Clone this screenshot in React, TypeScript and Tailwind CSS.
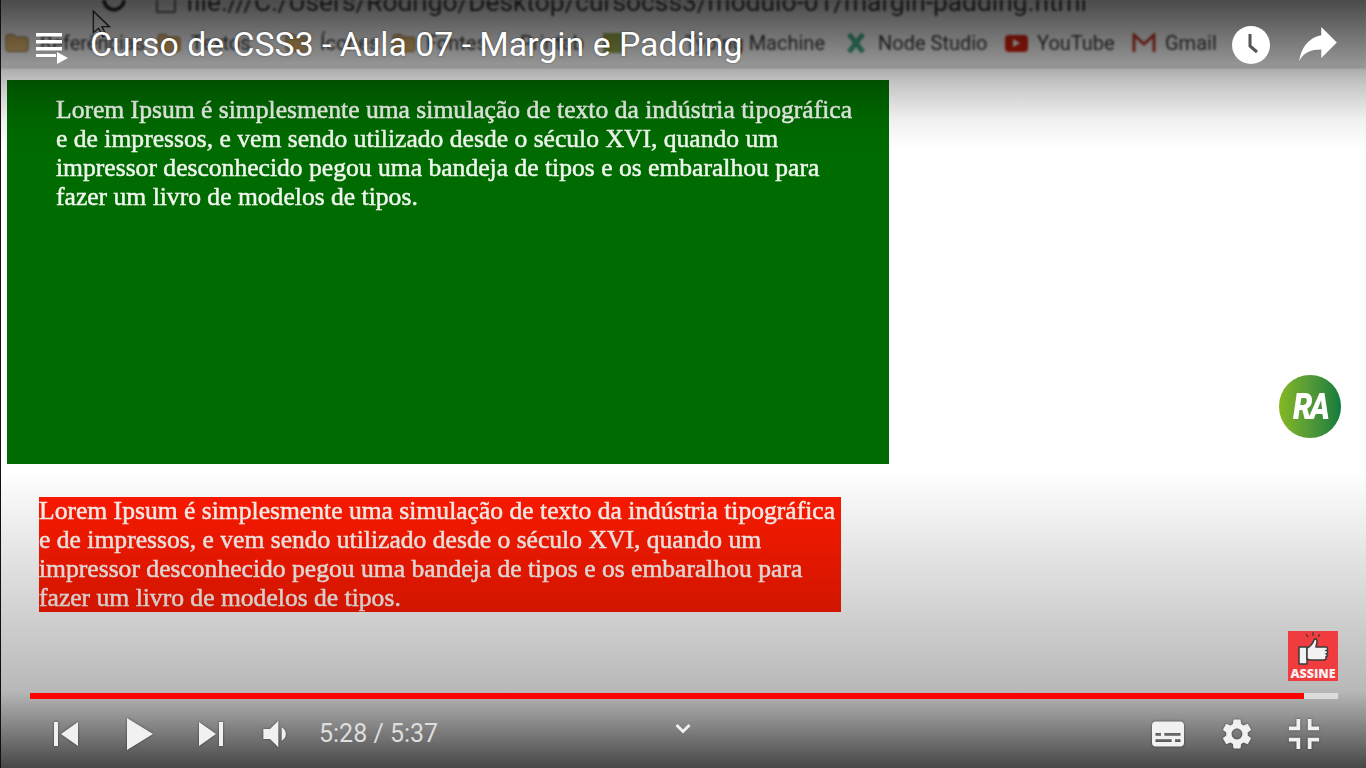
import { MdSettings } from "react-icons/md";

const LOREM =
  "Lorem Ipsum é simplesmente uma simulação de texto da indústria tipográfica e de impressos, e vem sendo utilizado desde o século XVI, quando um impressor desconhecido pegou uma bandeja de tipos e os embaralhou para fazer um livro de modelos de tipos.";

function Folder() {
  return (
    <svg width="24" height="20" viewBox="0 0 24 20" className="shrink-0">
      <path d="M1 3.500C1 2.400 1.900 1.500 3 1.500h6l2.500 2.500H21c1.100 0 2 .9 2 2v10.500c0 1.100-.9 2-2 2H3c-1.100 0-2-.9-2-2z" fill="#d0a866" stroke="#7d6a45" strokeWidth="1" />
    </svg>
  );
}

function BrowserChrome() {
  return (
    <div className="h-[68px] bg-[#e6e6e6] border-b border-[#b5b5b5] overflow-hidden blur-[1px] text-[#222]">
      {/* address bar, cut off by the video's top edge */}
      <div className="h-[22px] flex items-end pl-[102px]">
        <svg width="26" height="30" viewBox="0 0 26 30" className="shrink-0 mb-[5px]">
          <path d="M22 13a10 10 0 1 1-3.500-8" fill="none" stroke="#222" strokeWidth="3.500" />
        </svg>
        <div className="w-[20px] h-[14px] ml-[28px] border-2 border-t-0 border-[#666] rounded-b-[2px] shrink-0 mb-[9px]" />
        <span className="ml-[10px] text-[26.300px] leading-[28px] whitespace-nowrap mb-[6px] text-[#333] font-['Roboto',sans-serif]">
          file:///C:/Users/Rodrigo/Desktop/cursocss3/modulo-01/margin-padding.html
        </span>
      </div>
      {/* bookmarks */}
      <div className="h-[46px] flex items-center pb-[4px] pl-[5px] text-[20px] whitespace-nowrap font-['Roboto',sans-serif] text-[#333]">
        <Folder />
        <span className="ml-[11px] w-[117px]">Referências</span>
        <Folder />
        <span className="ml-[10px] w-[94px]">Textos</span>
        <Folder />
        <span className="ml-[11px] w-[72px]">Ícones</span>
        <Folder />
        <span className="ml-[10px] w-[94px]">Fontes</span>
        <span className="w-[83px]">Printab</span>
        <span className="w-[22px] h-[20px] bg-[#8d9c45] shrink-0" />
        <span className="w-[200px] text-right">Typing Machine</span>
        <svg width="20" height="24" viewBox="0 0 20 24" className="ml-[21px] shrink-0">
          <path d="M3 3l14 18M17 3L3 21" stroke="#3f9f80" strokeWidth="5" fill="none" />
        </svg>
        <span className="ml-[12px] w-[127px]">Node Studio</span>
        <span className="w-[23px] h-[17px] bg-[#c9200e] rounded-[4px] flex items-center justify-center shrink-0">
          <span className="border-l-[7px] border-l-[#eee] border-y-[4px] border-y-transparent" />
        </span>
        <span className="ml-[9px] w-[95px]">YouTube</span>
        <svg width="24" height="20" viewBox="0 0 24 20" className="shrink-0">
          <path d="M2 19V2l10 9 10-9v17" stroke="#b3352a" strokeWidth="3" fill="none" />
        </svg>
        <span className="ml-[9px]">Gmail</span>
      </div>
    </div>
  );
}

function VideoCursor() {
  return (
    <svg width="24" height="30" viewBox="0 0 22 28" className="absolute left-[91px] top-[9px] blur-[0.5px]">
      <path d="M2 2v20l5-4 4 8 3-1.500-4-8h7z" fill="none" stroke="#333" strokeWidth="1.300" />
    </svg>
  );
}

function TopBar() {
  return (
    <div className="absolute inset-x-0 top-0 h-[150px] bg-[linear-gradient(to_bottom,rgba(0,0,0,0.68)_0px,rgba(0,0,0,0.38)_60px,rgba(0,0,0,0.22)_85px,rgba(0,0,0,0.06)_120px,rgba(0,0,0,0)_150px)]">
      <div className="h-[90px] flex items-center text-white">
        <svg width="34" height="36" viewBox="0 0 34 36" className="ml-[35px] shrink-0 mt-[6px]" fill="#fff">
          <rect x="1" y="3" width="26" height="3.500" />
          <rect x="1" y="10" width="26" height="3.500" />
          <rect x="1" y="17" width="26" height="3.500" />
          <rect x="1" y="24" width="20" height="3" />
          <path d="M22 22l11 6-11 6z" />
        </svg>
        <span className="ml-[21px] text-[33.800px] leading-[40px] whitespace-nowrap font-['Roboto',sans-serif] [text-shadow:0_0_2px_rgba(0,0,0,0.5)]">
          Curso de CSS3 - Aula 07 - Margin e Padding
        </span>
        <svg width="38" height="38" viewBox="0 0 38 38" className="ml-auto shrink-0">
          <circle cx="19" cy="19" r="19" fill="#fff" />
          <path d="M18 8v12l7 6" fill="none" stroke="#555" strokeWidth="3" />
        </svg>
        <svg width="40" height="36" viewBox="0 0 24 22" className="ml-[28px] mr-[28px] shrink-0" fill="#fff">
          <path d="M14 5V0l9.500 9.500L14 19v-5.200C7.500 13.800 3 15.700.5 21 1.500 13 6 6.500 14 5z" />
        </svg>
      </div>
    </div>
  );
}

function ControlIcon({ size, children }: { size: number; children: React.ReactNode }) {
  return (
    <svg width={size} height={size} viewBox="0 0 36 36" fill="#f1f1f1" className="shrink-0 drop-shadow-[0_0_1px_rgba(0,0,0,0.5)]">
      {children}
    </svg>
  );
}

function Controls() {
  return (
    <div className="absolute inset-x-0 bottom-0 h-[298px] bg-gradient-to-b from-transparent via-[rgba(0,0,0,0.28)] via-[74%] to-[rgba(0,0,0,0.72)] flex flex-col justify-end">
      <div className="ml-[30px] mr-[28px] h-[6px] flex bg-[#dcdcdc]">
        <div className="w-[1274px] bg-[#ff0000]" />
      </div>
      <div className="h-[69px] pl-[30px] pr-[28px] flex items-center font-['Roboto',sans-serif]">
        <ControlIcon size={72}>
          <path d="M12 12h2v12h-2zm3.500 6l8.500 6V12z" />
        </ControlIcon>
        <div className="ml-[1px]">
          <ControlIcon size={72}>
            <path d="M12 26l6.500-4v-8L12 10zm6.500-4l6.500-4-6.500-4z" />
          </ControlIcon>
        </div>
        <ControlIcon size={72}>
          <path d="M12 24l8.500-6L12 12zM22 12v12h2V12z" />
        </ControlIcon>
        <div className="ml-[3px]">
          <ControlIcon size={60}>
            <path d="M8 21h4l5 5V10l-5 5H8zM19 14v8c1.480-.68 2.500-2.230 2.500-4 0-1.740-1.020-3.260-2.500-4z" />
          </ControlIcon>
        </div>
        <span className="ml-[9px] text-[25px] text-[#dedede] whitespace-nowrap">5:28 / 5:37</span>
        <svg width="18" height="12" viewBox="0 0 18 12" className="ml-[236px] -mt-[10px] shrink-0">
          <path d="M2.500 2l6.500 6.500L15.500 2" fill="none" stroke="#f1f1f1" strokeWidth="3" />
        </svg>
        <div className="ml-auto flex items-center">
          <div className="w-[68px] flex justify-center">
            <ControlIcon size={64}>
              <path
                fillRule="evenodd"
                d="M11 11c-1.100 0-2 .9-2 2v10c0 1.100.9 2 2 2h14c1.100 0 2-.9 2-2V13c0-1.100-.9-2-2-2zm0 6.500h3v1.500h-3zm5 0h9v1.500h-9zm-5 3.500h9v1.500h-9zm11 0h3v1.500h-3z"
              />
            </ControlIcon>
          </div>
          <div className="w-[68px] flex justify-center pl-[1px] drop-shadow-[0_0_1px_rgba(0,0,0,0.5)]">
            <MdSettings size={36} color="#f1f1f1" />
          </div>
          <ControlIcon size={68}>
            <path d="M14 14h-4v2h6v-6h-2zM22 14v-4h-2v6h6v-2zM20 26h2v-4h4v-2h-6zM10 22h4v4h2v-6h-6z" />
          </ControlIcon>
        </div>
      </div>
    </div>
  );
}

function Watermarks() {
  return (
    <>
      <div className="absolute left-[1279px] top-[375px] w-[62px] h-[63px] rounded-full bg-gradient-to-r from-[#84b821] to-[#0a7c3e] flex items-center justify-center">
        <span className="text-white text-[36px] leading-none font-black italic tracking-[-3px] scale-x-[0.85] font-['Roboto',sans-serif]">RA</span>
      </div>
      <div className="absolute left-[1288px] top-[631px] w-[50px] h-[50px] bg-[#f03c3f] flex flex-col items-center">
        <svg width="34" height="37" viewBox="0 0 34 37" className="shrink-0">
          <path d="M17 5V1M10 3l2 3M24 3l-2 3" stroke="#3a3a3a" strokeWidth="1.200" fill="none" />
          <rect x="3" y="16" width="8" height="17" fill="#f2f2f2" stroke="#3a3a3a" strokeWidth="1.500" />
          <path d="M11 17c4-2 6-5 7-8 1-2 3-1 3 1 0 3-1 4-1 6h10c2 0 2 3 .5 3.500 1.500.5 1.500 3 0 3.500 1 .5 1 3-.5 3 .5 1 0 3-2 3H15c-2 0-4-1-4-1z" fill="#f2f2f2" stroke="#3a3a3a" strokeWidth="1.500" />
        </svg>
        <span className="text-[12.500px] leading-[12px] font-extrabold text-[#f8f0f0] font-['Open_Sans',sans-serif]">ASSINE</span>
      </div>
    </>
  );
}

export default function App() {
  return (
    <div className="relative w-[1366px] h-[768px] overflow-hidden bg-white">
      <BrowserChrome />
      <div className="pt-[12px] pl-[7px] font-['Liberation_Serif',serif] text-[25.600px] leading-[29px] blur-[0.5px] [-webkit-text-stroke:0.5px]">
        <div className="w-[882px] h-[384px] bg-[#006b00] pt-[15px] pl-[49px] pr-[31px] text-[#f0f7ee]">
          {LOREM}
        </div>
        <div className="w-[802px] h-[115px] mt-[33px] ml-[32px] bg-[#ff1a00] text-[#fff4f0] flow-root">
          <p className="-mt-px">{LOREM}</p>
        </div>
      </div>
      <VideoCursor />
      <TopBar />
      <Controls />
      <Watermarks />
      <div className="absolute left-0 inset-y-0 w-px bg-[#111]" />
    </div>
  );
}
